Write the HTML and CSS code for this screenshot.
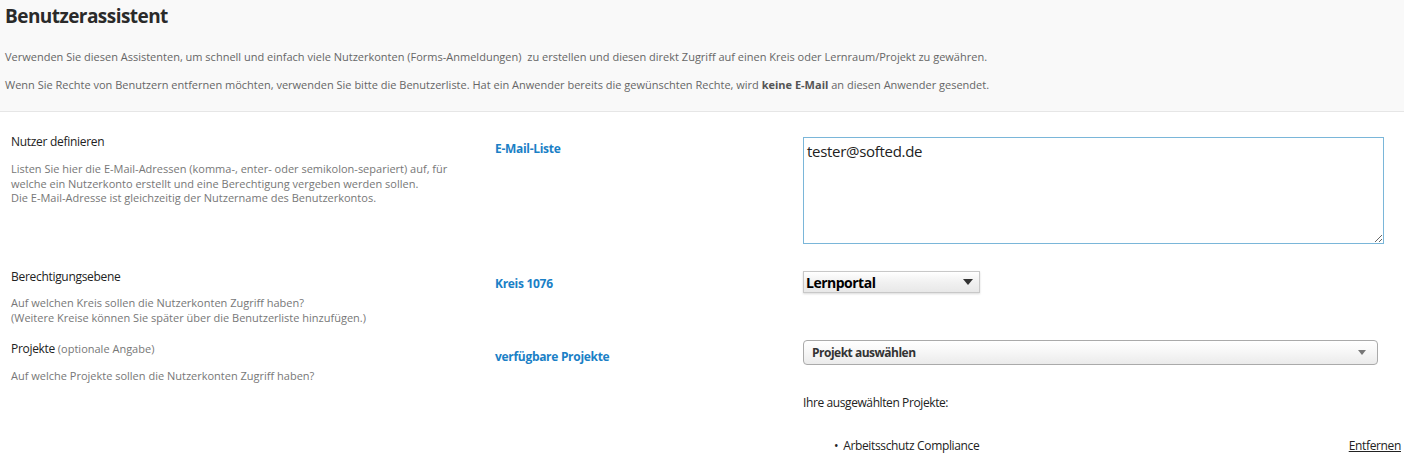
FILE: index.html
```html
<!DOCTYPE html>
<html lang="de">
<head>
  <meta charset="UTF-8">
  <title>Benutzerassistent</title>
  <link rel="stylesheet" href="styles.css">
</head>
<body>
  <header class="intro">
    <h1>Benutzerassistent</h1>
    <p>Verwenden Sie diesen Assistenten, um schnell und einfach viele Nutzerkonten (Forms-Anmeldungen)&nbsp; zu erstellen und diesen direkt Zugriff auf einen Kreis oder Lernraum/Projekt zu gewähren.</p>
    <p>Wenn Sie Rechte von Benutzern entfernen möchten, verwenden Sie bitte die Benutzerliste. Hat ein Anwender bereits die gewünschten Rechte, wird <b>keine E-Mail</b> an diesen Anwender gesendet.</p>
  </header>

  <form class="wizard">
    <!-- Nutzer -->
    <div class="row row-users">
      <div class="info">
        <h3>Nutzer definieren</h3>
        <p>Listen Sie hier die E-Mail-Adressen (komma-, enter- oder semikolon-separiert) auf, für welche ein Nutzerkonto erstellt und eine Berechtigung vergeben werden sollen.<br>Die E-Mail-Adresse ist gleichzeitig der Nutzername des Benutzerkontos.</p>
      </div>
      <label class="field-label" for="emails">E-Mail-Liste</label>
      <div class="field">
        <textarea id="emails" class="email-list">tester@softed.de</textarea>
      </div>
    </div>

    <!-- Kreis -->
    <div class="row row-circle">
      <div class="info">
        <h3>Berechtigungsebene</h3>
        <p>Auf welchen Kreis sollen die Nutzerkonten Zugriff haben?<br>(Weitere Kreise können Sie später über die Benutzerliste hinzufügen.)</p>
      </div>
      <label class="field-label">Kreis 1076</label>
      <div class="field">
        <div class="select select-circle">
          <span>Lernportal</span>
          <span class="caret"></span>
        </div>
      </div>
    </div>

    <!-- Projekte -->
    <div class="row row-projects">
      <div class="info">
        <h3>Projekte <small>(optionale Angabe)</small></h3>
        <p>Auf welche Projekte sollen die Nutzerkonten Zugriff haben?</p>
      </div>
      <label class="field-label">verfügbare Projekte</label>
      <div class="field">
        <div class="select select-project">
          <span>Projekt auswählen</span>
          <span class="caret small"></span>
        </div>
        <p class="chosen-title">Ihre ausgewählten Projekte:</p>
        <ul class="chosen">
          <li><span>Arbeitsschutz Compliance</span><a href="#">Entfernen</a></li>
        </ul>
      </div>
    </div>
  </form>
</body>
</html>
```

FILE: styles.css
```css
body {
  margin: 0;
  font-family: 'Open Sans', 'Noto Sans', sans-serif;
  font-size: 11px;
  color: #333;
  background: #fff;
}
.intro {
  background: #f9f9f9;
  border-bottom: 1px solid #e6e6e6;
  padding: 3px 5px 9px;
  height: 99px;
}
.intro h1 {
  margin: 0;
  font-size: 19px;
  font-weight: 700;
  color: #2a2a2a;
  letter-spacing: -0.55px;
}
.intro p {
  margin: 20px 0 0;
  color: #666;
}
.intro p + p {
  margin-top: 13px;
}
.intro b {
  color: #555;
}
.wizard {
  padding-left: 11px;
}
.row {
  display: grid;
  grid-template-columns: 484px 308px 1fr;
}
.info {
  max-width: 442px;
}
.info h3 {
  margin: 0;
  font-size: 12px;
  font-weight: 400;
  color: #222;
  letter-spacing: -0.3px;
}
.info h3 small {
  font-size: 11px;
  color: #777;
  letter-spacing: 0;
}
.info p {
  margin: 12px 0 0;
  color: #777;
  line-height: 14.5px;
}
.field-label {
  color: #1a80c6;
  font-weight: 700;
  font-size: 12px;
  letter-spacing: -0.3px;
}
.row-users {
  padding-top: 21px;
  height: 135px;
}
.row-users .field-label {
  padding-top: 7px;
}
.email-list {
  display: block;
  box-sizing: border-box;
  width: 581px;
  height: 107px;
  margin: 4px 0 0;
  padding: 3px 3px;
  border: 1px solid #7ab6d9;
  font-family: 'Open Sans', sans-serif;
  font-size: 15px;
  color: #222;
  resize: both;
  outline: none;
  letter-spacing: -0.3px;
}
.row-circle {
  height: 72px;
}
.row-circle .field-label {
  padding-top: 7px;
}
.row-circle .info p {
  margin-top: 11px;
}
.select {
  box-sizing: border-box;
  display: flex;
  align-items: center;
  justify-content: space-between;
  border: 1px solid #bbb;
  background: linear-gradient(#fff, #f1f1f1 50%, #e8e8e8);
}
.select-circle {
  width: 177px;
  height: 22px;
  margin-top: 3px;
  padding: 0 6px 0 2px;
  border-color: #c8c8c8;
  box-shadow: 0 1px 2px rgba(0, 0, 0, 0.15);
  font-weight: 700;
  font-size: 14px;
  color: #000;
  letter-spacing: -0.5px;
}
.caret {
  width: 0;
  height: 0;
  border-left: 5px solid transparent;
  border-right: 5px solid transparent;
  border-top: 6px solid #333;
}
.caret.small {
  border-left-width: 4px;
  border-right-width: 4px;
  border-top: 5px solid #777;
}
.row-projects .field-label {
  padding-top: 8px;
}
.select-project {
  width: 575px;
  height: 25px;
  padding: 0 11px 0 8px;
  border-radius: 4px;
  border-color: #aaa;
  background: linear-gradient(#fff, #f7f7f7 45%, #ebebeb);
  font-weight: 700;
  font-size: 12px;
  color: #333;
  letter-spacing: -0.5px;
}
.chosen-title {
  margin: 29px 0 0;
  font-size: 12px;
  color: #222;
  letter-spacing: -0.4px;
}
.chosen {
  margin: 26px 0 0;
  padding: 0 0 0 40px;
  list-style: none;
}
.chosen li {
  display: flex;
  justify-content: space-between;
  font-size: 12px;
  color: #222;
  letter-spacing: -0.35px;
  margin-right: 3px;
}
.chosen li span::before {
  content: "\2022";
  margin: 0 5px 0 -9px;
}
.chosen a {
  color: #222;
}
```
